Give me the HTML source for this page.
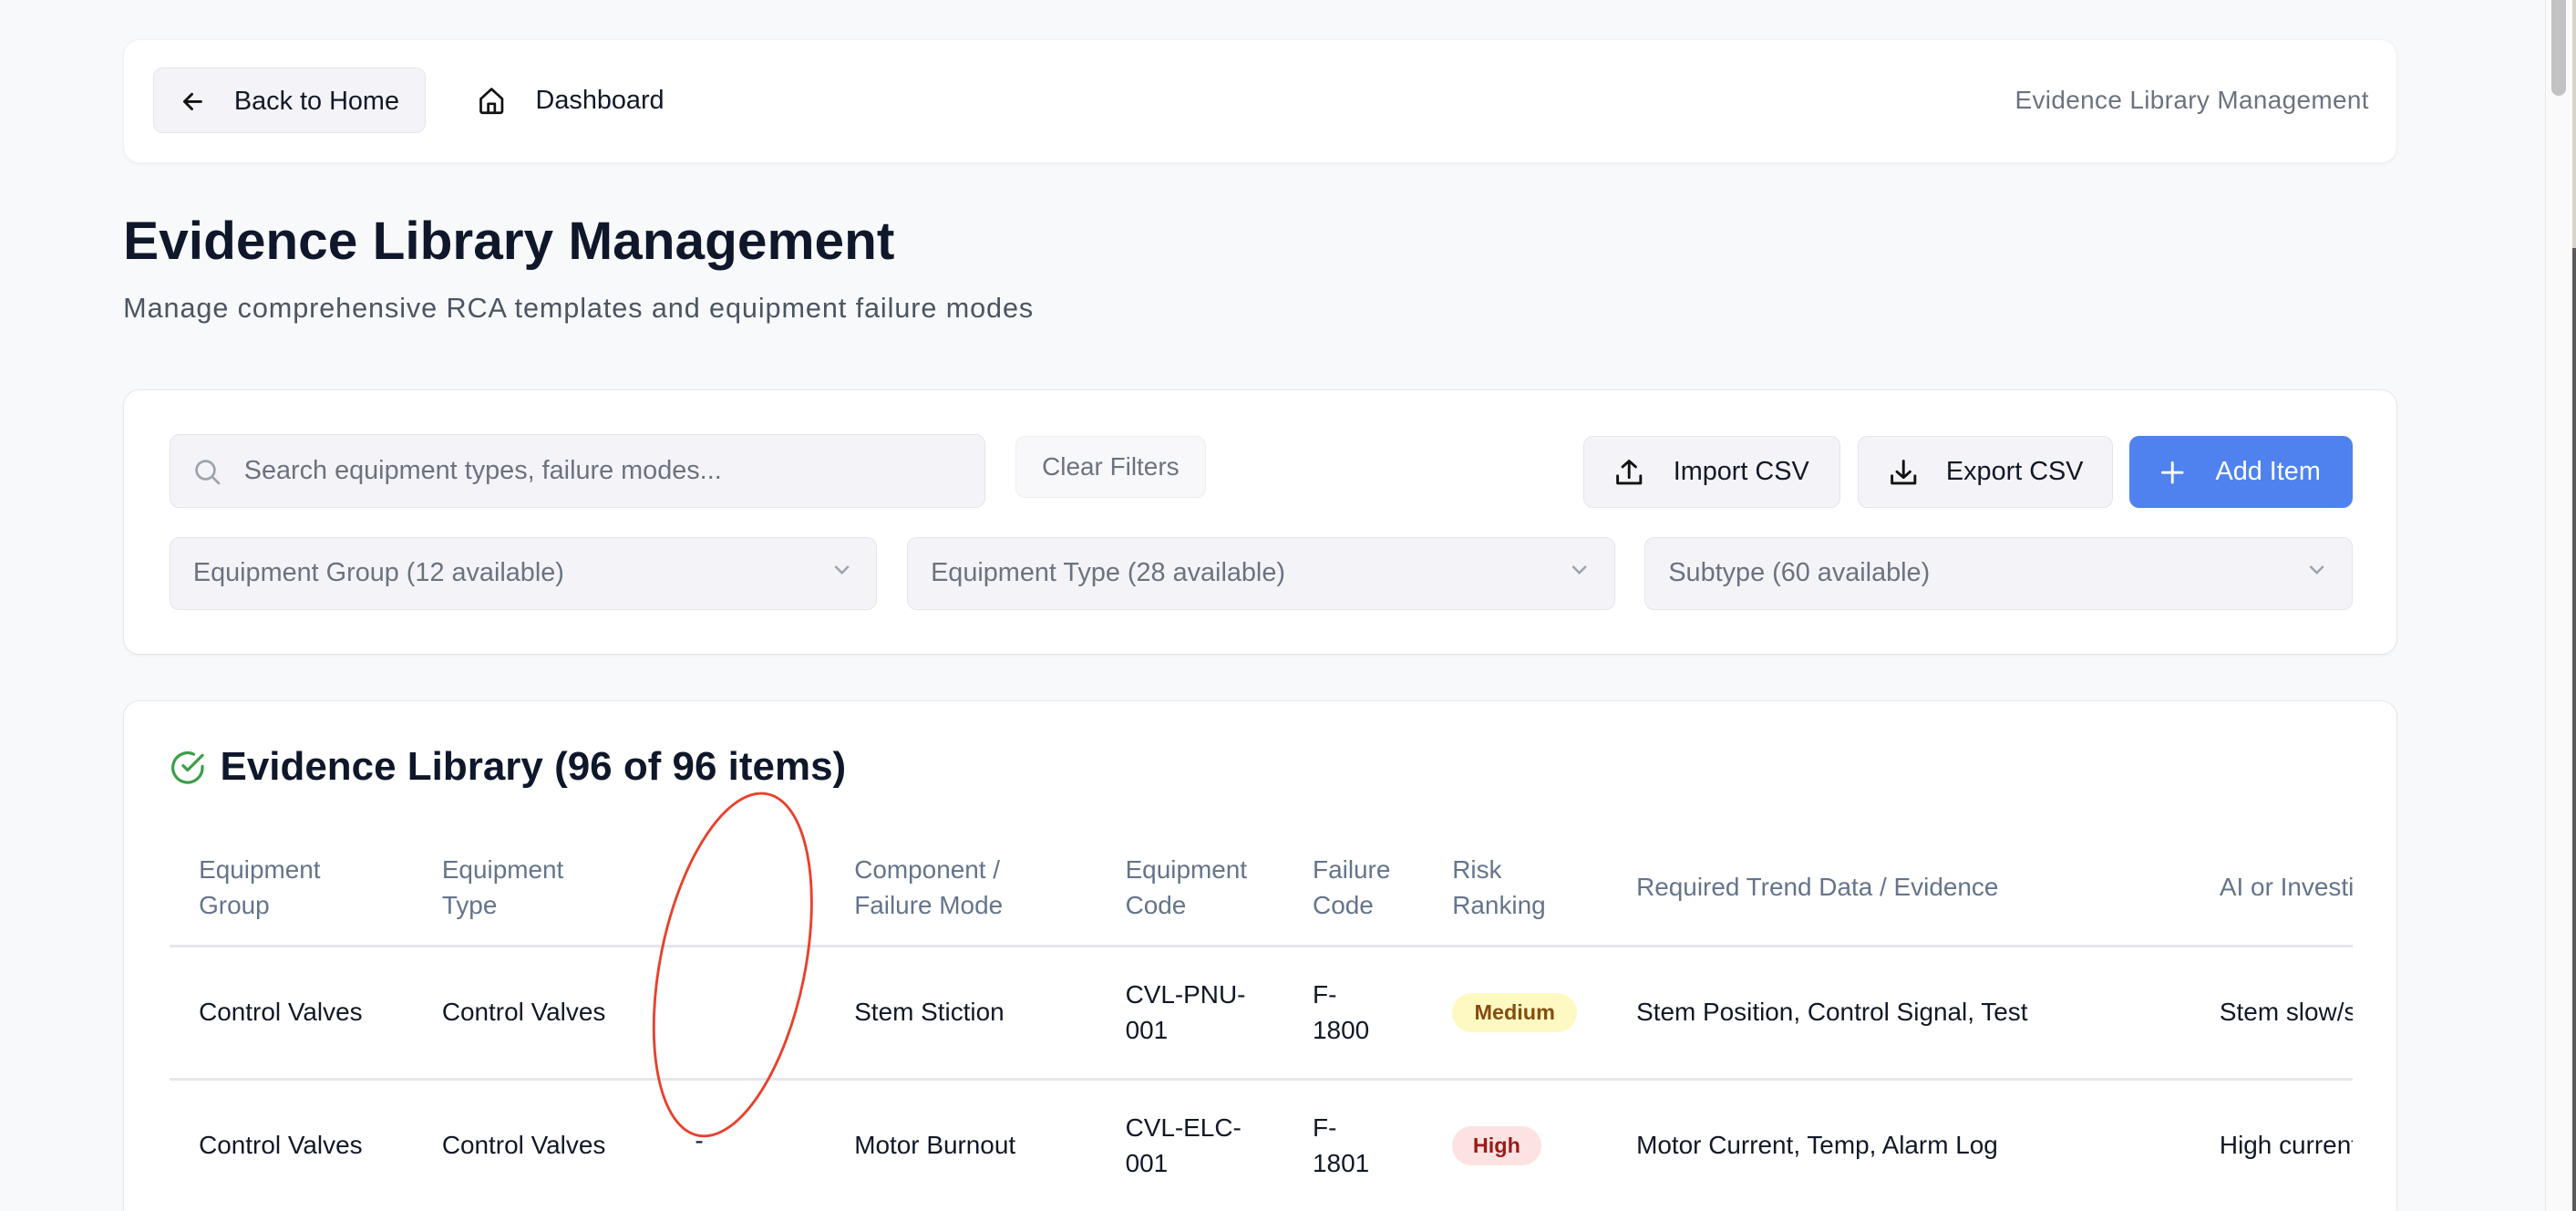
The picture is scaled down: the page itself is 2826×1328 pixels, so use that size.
<!DOCTYPE html>
<html><head><meta charset="utf-8">
<style>
html,body{margin:0;padding:0;overflow:hidden;}
body{width:2826px;height:1328px;background:#f8f9fb;font-family:"Liberation Sans",Arial,sans-serif;}
#z{zoom:1.80230;position:relative;width:1568px;height:737px;overflow:hidden;}
.a{position:absolute;}
.card{position:absolute;background:#fff;border:1px solid #e5e7eb;border-radius:10px;box-shadow:0 1px 2px rgba(0,0,0,.04);}
.btn{position:absolute;background:#f4f4f8;border:1px solid #e2e5eb;border-radius:6px;box-sizing:border-box;font-size:16px;color:#111827;display:flex;align-items:center;}
.inp{position:absolute;background:#f4f4f8;border:1px solid #e2e5eb;border-radius:6px;box-sizing:border-box;font-size:16px;color:#6b7280;display:flex;align-items:center;}
.th{position:absolute;font-size:15.5px;color:#64748b;line-height:22px;}
.td{position:absolute;font-size:15.5px;color:#111827;line-height:22px;}
.hr{position:absolute;left:103px;width:1329px;height:1px;background:#e5e7eb;}
.pill{position:absolute;height:24px;border-radius:12px;font-size:13px;font-weight:bold;display:flex;align-items:center;justify-content:center;}
</style></head><body>
<div id="z">
<div class="card" style="left:75px;top:24px;width:1383px;height:74px;border-color:#f0f1f3;"></div>
<div class="btn" style="left:93px;top:41px;width:166px;height:40px;">
<svg style="position:absolute;left:16px;top:12px" width="16" height="16" viewBox="0 0 16 16" fill="none" stroke="#111" stroke-width="1.6" stroke-linecap="round" stroke-linejoin="round"><path d="M13 8H3M7.5 3.5L3 8l4.5 4.5"/></svg>
<span style="position:absolute;left:49px;top:11px;">Back to Home</span></div>
<svg class="a" style="left:290px;top:52px" width="18" height="18" viewBox="0 0 18 18" fill="none" stroke="#111" stroke-width="1.5" stroke-linejoin="round"><path d="M2.5 8L9 2l6.5 6v7.5a1 1 0 0 1-1 1h-11a1 1 0 0 1-1-1z"/><path d="M7 16.5v-5.5h4v5.5"/></svg>
<div class="a" style="left:326px;top:52px;font-size:16px;color:#111827;">Dashboard</div>
<div class="a" style="left:1200px;top:52px;font-size:15.5px;color:#6b7280;width:242px;text-align:right;letter-spacing:0.2px;">Evidence Library Management</div>

<div class="a" style="left:75px;top:128px;font-size:32.5px;font-weight:bold;color:#0f172a;">Evidence Library Management</div>
<div class="a" style="left:75px;top:178px;font-size:17px;color:#4b5563;letter-spacing:0.5px;">Manage comprehensive RCA templates and equipment failure modes</div>

<div class="card" style="left:75px;top:237px;width:1383px;height:160px;"></div>
<div class="inp" style="left:103px;top:264px;width:497px;height:45px;">
<svg style="position:absolute;left:14px;top:14px" width="17" height="17" viewBox="0 0 17 17" fill="none" stroke="#9ca3af" stroke-width="1.5" stroke-linecap="round"><circle cx="7.5" cy="7.5" r="5.5"/><path d="M11.5 11.5l4 4"/></svg>
<span style="position:absolute;left:45px;">Search equipment types, failure modes...</span></div>
<div class="btn" style="left:618px;top:265px;width:116px;height:38px;background:#f8f8fa;border-color:#eceef1;color:#6b7280;font-size:15.5px;justify-content:center;">Clear Filters</div>
<div class="btn" style="left:964px;top:265px;width:156px;height:44px;">
<svg style="position:absolute;left:18px;top:13px" width="18" height="18" viewBox="0 0 18 18" fill="none" stroke="#111" stroke-width="1.6" stroke-linecap="round" stroke-linejoin="round"><path d="M9 12V2M5 5.5L9 2l4 3.5M2 11v4.5h14V11"/></svg>
<span style="position:absolute;left:54px;">Import CSV</span></div>
<div class="btn" style="left:1131px;top:265px;width:155px;height:44px;">
<svg style="position:absolute;left:18px;top:13px" width="18" height="18" viewBox="0 0 18 18" fill="none" stroke="#111" stroke-width="1.6" stroke-linecap="round" stroke-linejoin="round"><path d="M9 2v10M5 8.5L9 12l4-3.5M2 11v4.5h14V11"/></svg>
<span style="position:absolute;left:53px;">Export CSV</span></div>
<div class="btn" style="left:1296px;top:265px;width:136px;height:44px;background:#4f82ee;border-color:#4f82ee;color:#fff;">
<svg style="position:absolute;left:17px;top:13px" width="18" height="18" viewBox="0 0 18 18" fill="none" stroke="#fff" stroke-width="1.6" stroke-linecap="round"><path d="M9 3v12M3 9h12"/></svg>
<span style="position:absolute;left:52px;">Add Item</span></div>
<div class="inp" style="left:103px;top:327px;width:431px;height:44px;"><span style="position:absolute;left:14px;">Equipment Group (12 available)</span><span style="position:absolute;right:14px;top:12px"><svg width="14" height="14" viewBox="0 0 14 14" fill="none" stroke="#9ca3af" stroke-width="1.4"><path d="M3 5l4 4 4-4"/></svg></span></div>
<div class="inp" style="left:552px;top:327px;width:431px;height:44px;"><span style="position:absolute;left:14px;">Equipment Type (28 available)</span><span style="position:absolute;right:14px;top:12px"><svg width="14" height="14" viewBox="0 0 14 14" fill="none" stroke="#9ca3af" stroke-width="1.4"><path d="M3 5l4 4 4-4"/></svg></span></div>
<div class="inp" style="left:1001px;top:327px;width:431px;height:44px;"><span style="position:absolute;left:14px;">Subtype (60 available)</span><span style="position:absolute;right:14px;top:12px"><svg width="14" height="14" viewBox="0 0 14 14" fill="none" stroke="#9ca3af" stroke-width="1.4"><path d="M3 5l4 4 4-4"/></svg></span></div>

<div class="card" style="left:75px;top:426px;width:1383px;height:340px;"></div>
<svg class="a" style="left:103px;top:456px" width="22" height="22" viewBox="0 0 22 22" fill="none" stroke="#3d9e4a" stroke-width="1.8" stroke-linecap="round" stroke-linejoin="round"><path d="M20 10.2V11a9 9 0 1 1-5.3-8.2"/><path d="M20 3.5L11 12.5l-2.7-2.7"/></svg>
<div class="a" style="left:134px;top:453px;font-size:24.4px;font-weight:bold;color:#0f172a;">Evidence Library (96 of 96 items)</div>

<div style="position:absolute;left:103px;top:500px;width:1329px;height:237px;overflow:hidden;">
<div style="position:relative;left:-103px;top:-500px;">
<div class="th" style="left:121px;top:518px;">Equipment<br>Group</div>
<div class="th" style="left:269px;top:518px;">Equipment<br>Type</div>
<div class="th" style="left:520px;top:518px;">Component /<br>Failure Mode</div>
<div class="th" style="left:685px;top:518px;">Equipment<br>Code</div>
<div class="th" style="left:799px;top:518px;">Failure<br>Code</div>
<div class="th" style="left:884px;top:518px;">Risk<br>Ranking</div>
<div class="th" style="left:996px;top:529px;white-space:nowrap;">Required Trend Data / Evidence</div>
<div class="th" style="left:1351px;top:529px;white-space:nowrap;">AI or Investigator Questions</div>
<div class="hr" style="top:575px;height:1.5px;"></div>

<div class="td" style="left:121px;top:605px;">Control Valves</div>
<div class="td" style="left:269px;top:605px;">Control Valves</div>
<div class="td" style="left:520px;top:605px;">Stem Stiction</div>
<div class="td" style="left:685px;top:594px;">CVL-PNU-<br>001</div>
<div class="td" style="left:799px;top:594px;">F-<br>1800</div>
<div class="pill" style="left:884px;top:604px;width:76px;background:#fef9c3;color:#854d0e;">Medium</div>
<div class="td" style="left:996px;top:605px;white-space:nowrap;">Stem Position, Control Signal, Test</div>
<div class="td" style="left:1351px;top:605px;white-space:nowrap;">Stem slow/sticky response</div>
<div class="hr" style="top:656px;height:1.5px;"></div>

<div class="td" style="left:121px;top:686px;">Control Valves</div>
<div class="td" style="left:269px;top:686px;">Control Valves</div>
<div class="td" style="left:423px;top:683px;">-</div>
<div class="td" style="left:520px;top:686px;">Motor Burnout</div>
<div class="td" style="left:685px;top:675px;">CVL-ELC-<br>001</div>
<div class="td" style="left:799px;top:675px;">F-<br>1801</div>
<div class="pill" style="left:884px;top:685px;width:54px;background:#fde2e2;color:#991b1b;">High</div>
<div class="td" style="left:996px;top:686px;white-space:nowrap;">Motor Current, Temp, Alarm Log</div>
<div class="td" style="left:1351px;top:686px;white-space:nowrap;">High current or overheating</div>
</div></div>

<svg class="a" style="left:0;top:0" width="1568" height="737"><ellipse cx="446" cy="587" rx="44" ry="106" transform="rotate(11.5 446 587)" fill="none" stroke="#e8412c" stroke-width="1.6"/></svg>

<div class="a" style="left:1549px;top:0;width:17px;height:737px;background:#fafafa;border-left:1px solid #e6e6e6;"></div>
<div class="a" style="left:1553px;top:0;width:9px;height:58px;background:#c2c2c2;border-radius:0 0 5px 5px;"></div>
<div class="a" style="left:1566px;top:0;width:2px;height:151px;background:#d8d4c8;"></div>
<div class="a" style="left:1566px;top:151px;width:2px;height:586px;background:#5a5a5a;"></div>
</div>
</body></html>
